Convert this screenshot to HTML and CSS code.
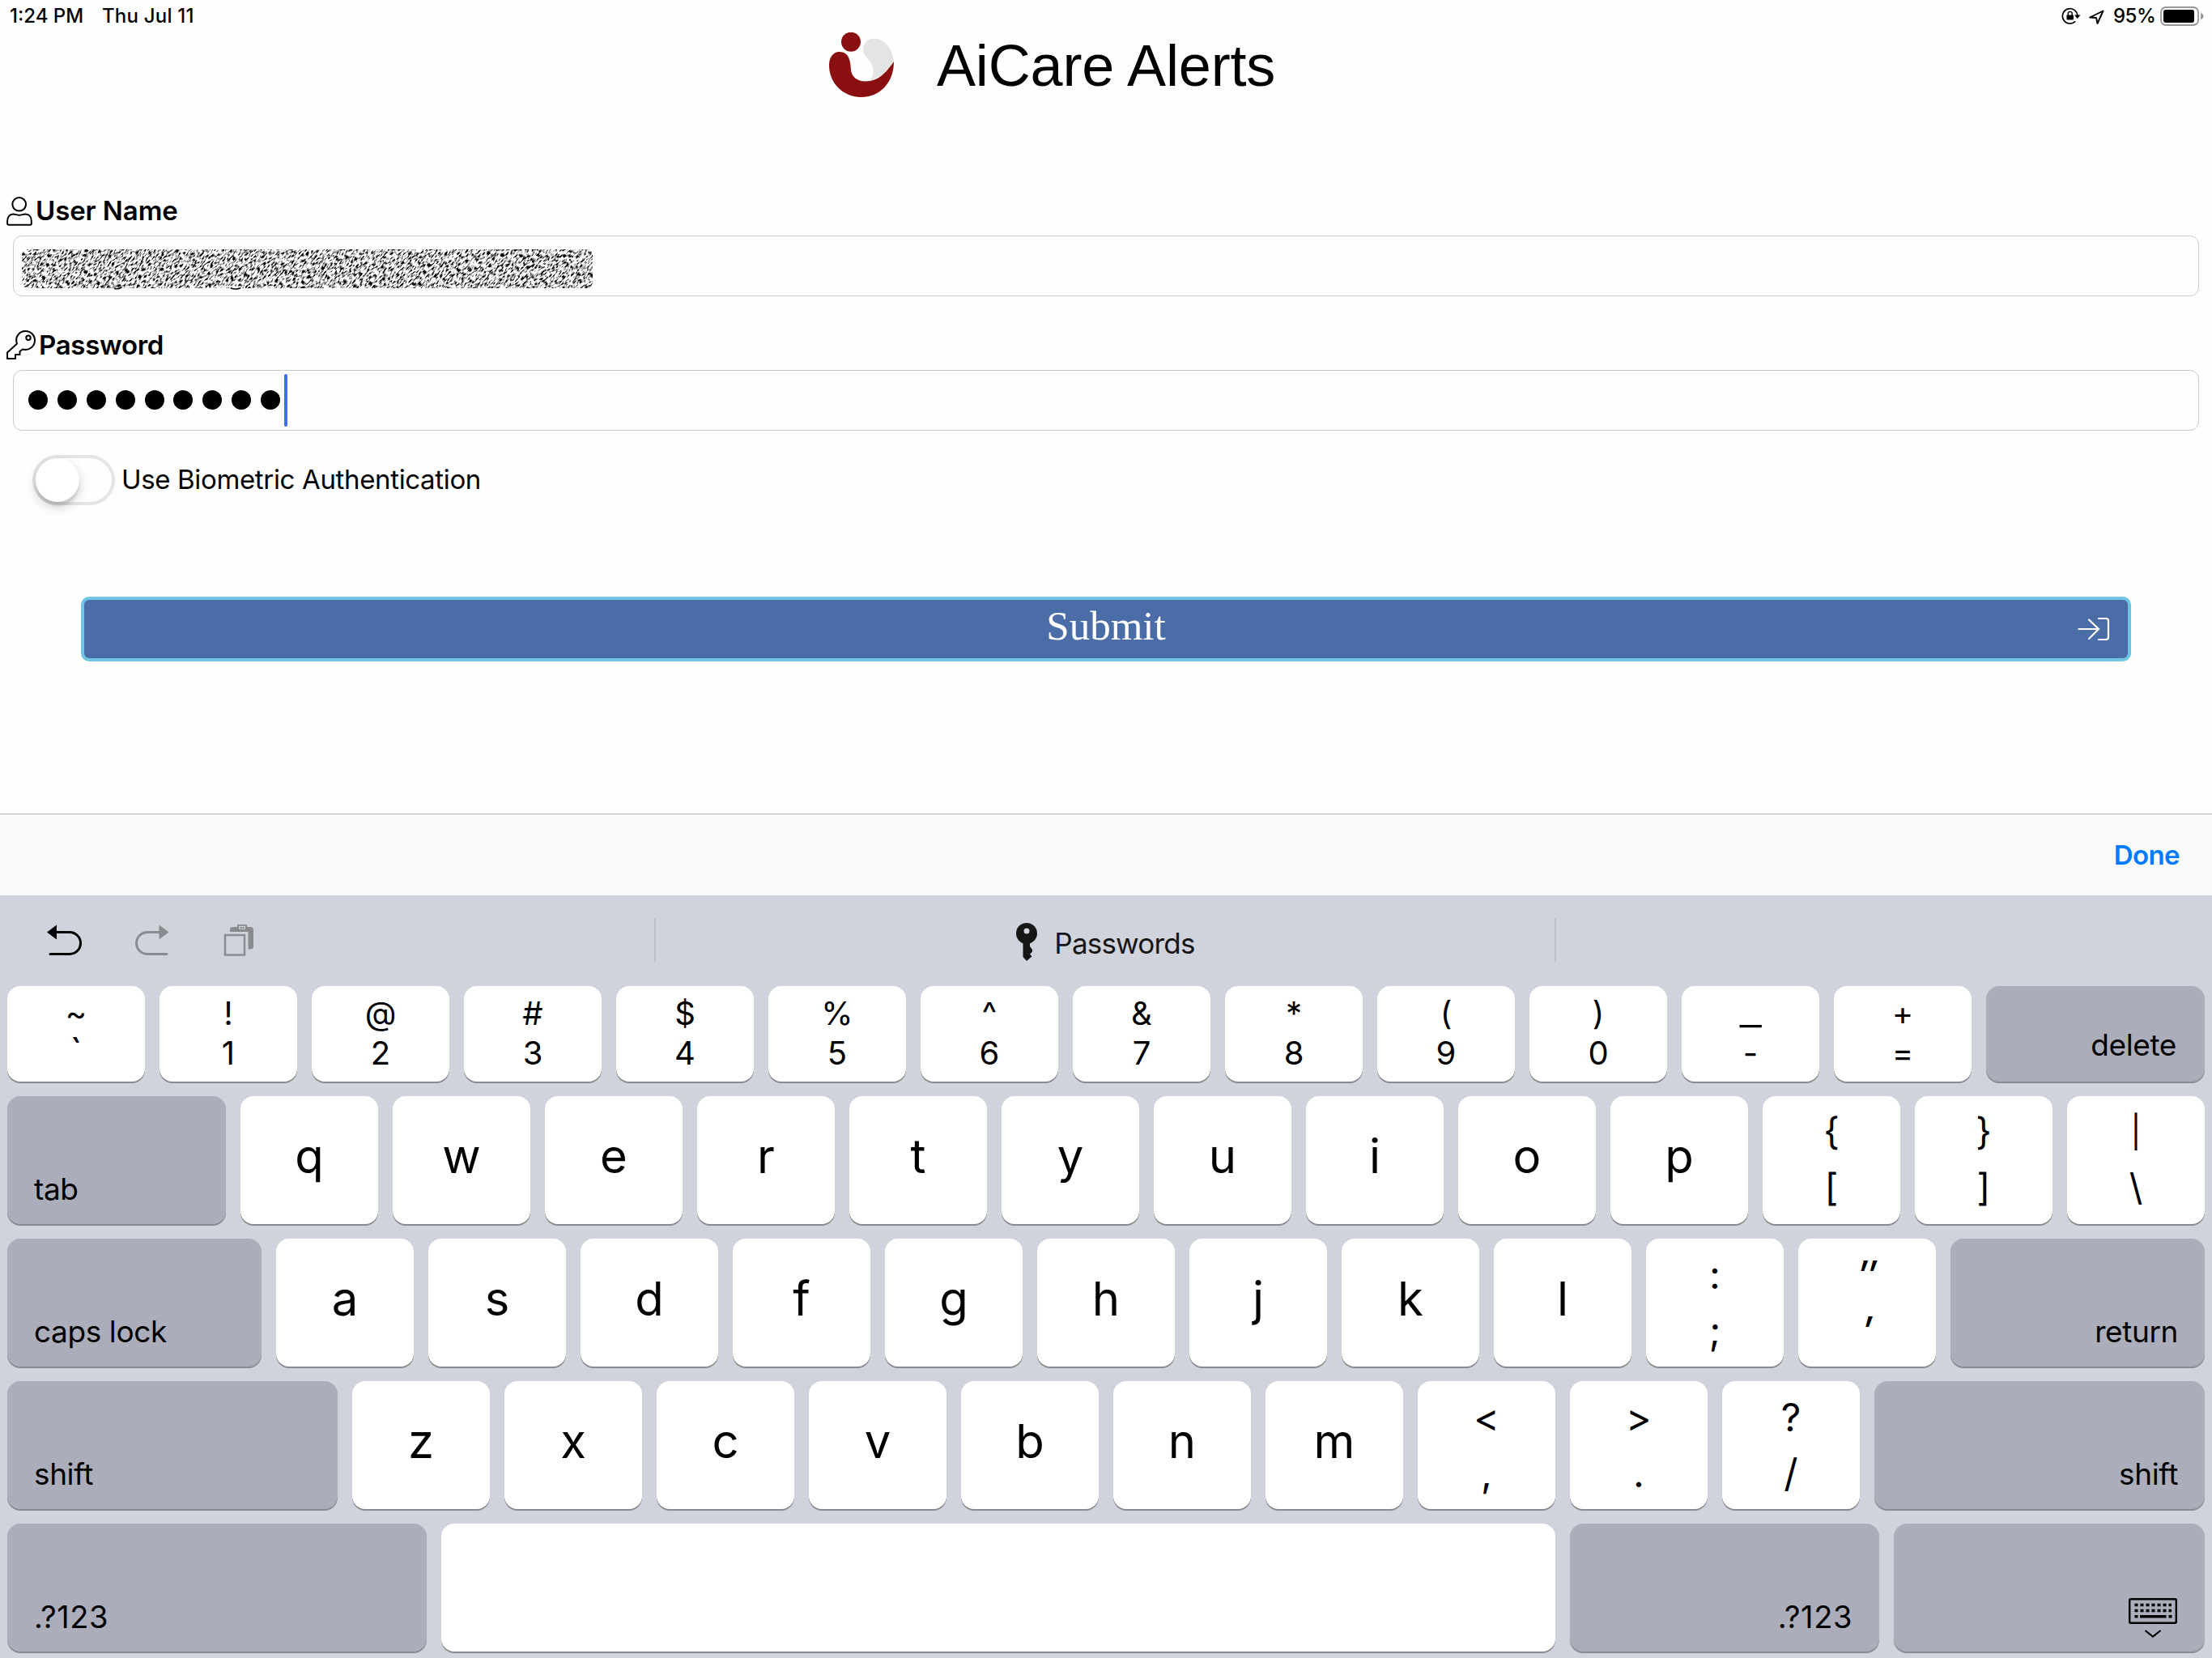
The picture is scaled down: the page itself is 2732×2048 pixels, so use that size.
FILE: index.html
```html
<!DOCTYPE html>
<html lang="en">
<head>
  <meta charset="UTF-8" />
  <title>AiCare Alerts</title>
  <meta name="viewport" content="width=device-width, initial-scale=1.0" />
  <link rel="stylesheet" href="styles.css">
</head>
<body>
  <div class="status-bar">
    <span class="time">1:24 PM</span>
    <span class="date">Thu Jul 11</span>
    <div class="status-right">
      <svg class="lock-icon" width="24" height="22" viewBox="0 0 24 22">
        <path d="M17.200 17.300A9.200 9.200 0 1 1 19.800 10" fill="none" stroke="#000" stroke-width="1.700"/>
        <path d="M16 9.500h7.500l-3.800 4.500z"/>
        <rect x="6.500" y="9.500" width="8.500" height="6" rx="0.800"/>
        <path d="M8.300 10V7.800a2.450 2.450 0 0 1 4.900 0V10" fill="none" stroke="#000" stroke-width="1.400"/>
      </svg>
      <svg class="nav-icon" width="19" height="19" viewBox="0 0 19 19">
        <path d="M1.200 9.500 17.500 1.500 10.500 17 9 10z" fill="none" stroke="#000" stroke-width="1.900" stroke-linejoin="round"/>
      </svg>
      <span class="percent">95%</span>
      <svg class="battery" width="54" height="24" viewBox="0 0 54 24">
        <rect x="1" y="1" width="46" height="22" rx="6" fill="none" stroke="#98989a" stroke-width="1.800"/>
        <rect x="4" y="4" width="38" height="16" rx="3"/>
        <path d="M50 8q3.500 1 3.500 4T50 16z" fill="#98989a"/>
      </svg>
    </div>
  </div>

  <header class="header">
    <svg class="logo" width="80" height="80" viewBox="0 0 80 80">
      <path d="M56 7.500C47 7.500 42 14 42 21.500 42 31 54 35 54.500 46 54.500 52 53 56 50 59 62 57 72 48 80 35.500 78 20 68 7.500 56 7.500z" fill="#e4e4e4"/>
      <path d="M12.600 24C5 24 0 31 0 40.500 0 63 18 80 39.600 80 62 80 80 63 80 36 71 49 61 60.500 45 60.500 35 60.500 27.500 55 27 46 26.500 36 25 24 12.600 24z" fill="#8a0f10"/>
      <circle cx="27" cy="11.700" r="12" fill="#8a0f10"/>
    </svg>
    <h1>AiCare Alerts</h1>
  </header>

  <form class="login-form">
    <div class="label user-label">
      <svg width="32" height="36" viewBox="0 0 32 36" fill="none" stroke="#000" stroke-width="2">
        <circle cx="15.700" cy="9.300" r="8.300"/>
        <path d="M3 34.800H29.500Q30.800 34.800 30.800 33V30C30.800 25 28 21.500 23.500 21.500 20 21.500 19 22.700 15.700 22.700 12.500 22.700 11.500 21.500 8.200 21.500 4 21.500 1.100 25 1.100 30V33Q1.100 34.800 3 34.800z"/>
      </svg>
      <span>User Name</span>
    </div>
    <div class="field">
      <svg class="scribble" width="706" height="52" viewBox="0 0 706 52">
        <defs>
          <filter id="grain" x="0" y="0" width="100%" height="100%">
            <feTurbulence type="fractalNoise" baseFrequency="0.2 0.62" numOctaves="2" seed="4"/>
            <feColorMatrix type="matrix" values="0 0 0 0 0  0 0 0 0 0  0 0 0 0 0  5 0 0 0 -2.300"/>
          </filter>
          <clipPath id="strip"><rect width="705" height="48" rx="8"/></clipPath>
        </defs>
        <g clip-path="url(#strip)">
          <g transform="rotate(-48)">
            <rect x="-60" y="-20" width="600" height="620" filter="url(#grain)"/>
          </g>
        </g>
        <path d="M114 48q4 2 9-1M258 48q6 2 12 0" fill="none" stroke="#000" stroke-width="1.500"/>
      </svg>
    </div>

    <div class="label password-label">
      <svg width="36" height="36" viewBox="0 0 36 36" fill="none" stroke="#000" stroke-width="2" stroke-linejoin="round">
        <path d="M13 16.500C10 8 16 1 23.500 1 30.500 1 35 6.500 35 12.500 35 20 28 25.500 20 23.500L16.500 26V30H11V35H1V27.500z"/>
        <circle cx="27" cy="9.300" r="2.700"/>
      </svg>
      <span>Password</span>
    </div>
    <div class="field password-field">
      <i></i><i></i><i></i><i></i><i></i><i></i><i></i><i></i><i></i>
      <span class="caret"></span>
    </div>

    <div class="biometric">
      <div class="toggle"><div class="knob"></div></div>
      <span>Use Biometric Authentication</span>
    </div>

    <button type="button" class="submit">
      Submit
      <svg class="submit-icon" width="40" height="30" viewBox="0 0 40 30" fill="none" stroke="#fff" stroke-width="2.200" stroke-linecap="round">
        <path d="M1.500 15H26M14 3.500 26 15 14 27"/>
        <path d="M26 2H35Q38 2 38 5V25Q38 28 35 28H26"/>
      </svg>
    </button>
  </form>

  <div class="done-bar">Done</div>

  <div class="keyboard">
    <div class="toolbar">
      <div class="tools">
        <svg width="44" height="40" viewBox="0 0 44 40">
          <path d="M12 10.500H28A13.500 13.500 0 0 1 28 37.500H4" fill="none" stroke="#000" stroke-width="3" stroke-linecap="round"/>
          <path d="M0 10.500 12 1.500V19.500z"/>
        </svg>
        <svg width="44" height="40" viewBox="0 0 44 40">
          <path d="M32 10.500H16A13.500 13.500 0 0 0 16 37.500H40" fill="none" stroke="#8a8b8f" stroke-width="3" stroke-linecap="round"/>
          <path d="M42.500 10.500 30.500 1.500V19.500z" fill="#8a8b8f"/>
        </svg>
        <svg class="paste" width="38" height="40" viewBox="0 0 38 40">
          <rect x="2" y="14" width="24" height="24.500" fill="none" stroke="#8a8b8f" stroke-width="2.400"/>
          <path d="M8 10V8Q8 4 12 4H17V1H29V4H33Q37 4 37 8V28Q37 31.500 33 31.500H30.500V10z" fill="#8a8b8f"/>
          <path d="M19 4.800h8" stroke="#d0d3db" stroke-width="4"/>
          <path d="M20 5h6" stroke="#8a8b8f" stroke-width="1.600"/>
        </svg>
      </div>
      <div class="suggestion">
        <svg width="28" height="48" viewBox="0 0 28 48">
          <path d="M14 0C6.500 0 1 5.500 1 13 1 18.500 4.500 23.500 9.500 25.200V42L14 47 20.500 41.500 18 38.500 21 35.500V33L18 29V25.200C23.500 23.500 27 18.500 27 13 27 5.500 21.500 0 14 0z" fill="#161616"/>
          <circle cx="14" cy="10" r="3.500" fill="#d0d3db"/>
        </svg>
        <span>Passwords</span>
      </div>
      <div class="tools-end"></div>
    </div>

    <div class="row numbers">
      <div class="key two"><span>~</span><span class="tick">`</span></div>
      <div class="key two"><span>!</span><span>1</span></div>
      <div class="key two"><span>@</span><span>2</span></div>
      <div class="key two"><span>#</span><span>3</span></div>
      <div class="key two"><span>$</span><span>4</span></div>
      <div class="key two"><span>%</span><span>5</span></div>
      <div class="key two"><span>^</span><span>6</span></div>
      <div class="key two"><span>&amp;</span><span>7</span></div>
      <div class="key two"><span>*</span><span>8</span></div>
      <div class="key two"><span>(</span><span>9</span></div>
      <div class="key two"><span>)</span><span>0</span></div>
      <div class="key two"><span class="underscore">_</span><span>-</span></div>
      <div class="key two"><span>+</span><span>=</span></div>
      <div class="key dark right">delete</div>
    </div>

    <div class="row">
      <div class="key dark tab">tab</div>
      <div class="key">q</div>
      <div class="key">w</div>
      <div class="key">e</div>
      <div class="key">r</div>
      <div class="key">t</div>
      <div class="key">y</div>
      <div class="key">u</div>
      <div class="key">i</div>
      <div class="key">o</div>
      <div class="key">p</div>
      <div class="key two"><span>{</span><span>[</span></div>
      <div class="key two"><span>}</span><span>]</span></div>
      <div class="key two"><span class="pipe">|</span><span>\</span></div>
    </div>

    <div class="row">
      <div class="key dark">caps lock</div>
      <div class="key">a</div>
      <div class="key">s</div>
      <div class="key">d</div>
      <div class="key">f</div>
      <div class="key">g</div>
      <div class="key">h</div>
      <div class="key">j</div>
      <div class="key">k</div>
      <div class="key">l</div>
      <div class="key two low"><span>:</span><span>;</span></div>
      <div class="key two low slant"><span>″</span><span>′</span></div>
      <div class="key dark right">return</div>
    </div>

    <div class="row">
      <div class="key dark">shift</div>
      <div class="key">z</div>
      <div class="key">x</div>
      <div class="key">c</div>
      <div class="key">v</div>
      <div class="key">b</div>
      <div class="key">n</div>
      <div class="key">m</div>
      <div class="key two low"><span>&lt;</span><span>,</span></div>
      <div class="key two low"><span>&gt;</span><span>.</span></div>
      <div class="key two low"><span>?</span><span>/</span></div>
      <div class="key dark right">shift</div>
    </div>

    <div class="row bottom">
      <div class="key dark">.?123</div>
      <div class="key space"></div>
      <div class="key dark right symbols">.?123</div>
      <div class="key dark right hide">
        <svg width="60" height="52" viewBox="0 0 60 52" fill="none" stroke="#000">
          <rect x="1.200" y="1.200" width="57.600" height="29.600" rx="1.500" stroke-width="2.400"/>
          <path d="M7.500 8.500H53M7.500 15.500H53" stroke-width="3.600" stroke-dasharray="4 3"/>
          <path d="M7.500 22.800h4M14 22.800H46.500M49.500 22.800h4" stroke-width="3.600"/>
          <path d="M20.500 40 30 47.500 39.500 40" stroke-width="2.200"/>
        </svg>
      </div>
    </div>
  </div>
</body>
</html>
```
FILE: styles.css
```css
* {
  margin: 0;
  padding: 0;
  box-sizing: border-box;
}

body {
  width: 2732px;
  height: 2048px;
  overflow: hidden;
  display: flex;
  flex-direction: column;
  background: #fefefe;
  color: #000;
  font-family: Inter, Roboto, sans-serif;
}

svg {
  display: block;
  flex: none;
}

/* status bar */
.status-bar {
  display: flex;
  align-items: center;
  height: 40px;
  padding: 0 10px 0 12px;
  font-size: 24px;
  font-weight: 500;
  line-height: 40px;
  white-space: nowrap;
}

.time {
  width: 114px;
}

.date {
  letter-spacing: 0.2px;
}

.status-right {
  display: flex;
  align-items: center;
  margin-left: auto;
}

.nav-icon {
  margin: 2px 11px 0 10px;
}

.percent {
  width: 58px;
  letter-spacing: -0.5px;
}

/* title */
.header {
  display: flex;
  align-items: center;
  height: 80px;
  padding-left: 1024px;
  gap: 53px;
}

.header h1 {
  padding-top: 2px;
  font-family: "Liberation Sans", Arial, sans-serif;
  font-size: 72px;
  font-weight: 400;
  line-height: 82px;
  letter-spacing: -0.15px;
}

/* form */
.login-form {
  height: 885px;
  padding: 121px 16px 0;
}

.label {
  display: flex;
  align-items: center;
  height: 40px;
  margin-left: -8px;
  gap: 4px;
  font-size: 33px;
  font-weight: 600;
  line-height: 40px;
  letter-spacing: -0.1px;
}

.user-label span {
  margin-top: -2px;
}

.password-label {
  margin-top: 40px;
  letter-spacing: -0.3px;
}

.field {
  display: flex;
  align-items: center;
  height: 75px;
  margin-top: 10px;
  border: 1.5px solid #cbcbcd;
  border-radius: 11px;
}

.password-field {
  margin-top: 11px;
  padding: 0 0 1px 18px;
  gap: 11.9px;
}

.password-field i {
  width: 24px;
  height: 24px;
  border-radius: 50%;
  background: #000;
}

.caret {
  width: 4px;
  height: 65px;
  margin-left: -7px;
  border-radius: 2px;
  background: #416ef0;
}

.scribble {
  margin: 11px 0 0 10px;
}

.biometric {
  display: flex;
  align-items: center;
  gap: 8px;
  margin: 30px 0 0 24px;
  font-size: 33px;
  line-height: 62px;
  letter-spacing: -0.35px;
}

.biometric span {
  margin-top: -2px;
}

.toggle {
  width: 102px;
  height: 62px;
  border: 4px solid #e5e5e6;
  border-radius: 31px;
}

.knob {
  width: 54px;
  height: 54px;
  border-radius: 50%;
  background: #fff;
  box-shadow: 0 6px 14px rgba(0, 0, 0, 0.2), 0 5px 2px rgba(0, 0, 0, 0.08);
}

.submit {
  position: relative;
  display: block;
  width: 2532px;
  height: 80px;
  margin: 113px 0 0 84px;
  padding-bottom: 8px;
  border: 4px solid #6ec6e4;
  border-radius: 10px;
  background: #4a6da7;
  color: #fff;
  font-family: "Liberation Serif", Georgia, serif;
  font-size: 51px;
}

.submit-icon {
  position: absolute;
  top: 21px;
  right: 22px;
}

.done-bar {
  height: 101px;
  padding-right: 40px;
  border-top: 1px solid #afafb1;
  background: #f9f9f9;
  color: #007aff;
  font-size: 33px;
  font-weight: 600;
  line-height: 100px;
  letter-spacing: -0.6px;
  text-align: right;
}

/* keyboard */
.keyboard {
  display: flex;
  flex-direction: column;
  gap: 18px;
  height: 942px;
  padding: 0 9px 8px;
  background: #d0d3db;
}

.toolbar {
  display: flex;
  align-items: center;
  height: 94px;
  padding-top: 16px;
}

.tools {
  display: flex;
  width: 799px;
  padding-left: 49px;
  gap: 64px;
}

.paste {
  margin-left: 2px;
}

.tools-end {
  flex: 1;
}

.suggestion {
  display: flex;
  align-items: center;
  justify-content: center;
  width: 1114px;
  height: 54px;
  gap: 20px;
  border-left: 2px solid #bbbec4;
  border-right: 2px solid #bbbec4;
  color: #161616;
  font-size: 35px;
  letter-spacing: -0.8px;
}

.suggestion svg {
  margin-top: 6px;
}

.suggestion span {
  margin-top: 7px;
}

.row {
  display: flex;
  gap: 18px;
  height: 158px;
}

.key {
  display: flex;
  align-items: center;
  justify-content: center;
  width: 170px;
  padding-bottom: 11px;
  border-radius: 16px;
  background: #fff;
  box-shadow: 0 2px 0 #88898d;
  font-size: 58px;
}

.two {
  flex-direction: column;
  padding-bottom: 3px;
  font-size: 46px;
}

.two span {
  line-height: 69px;
}

.low {
  padding-bottom: 0;
  font-size: 48px;
}

.slant {
  font-style: italic;
  font-weight: 500;
}

.pipe {
  font-size: 39px;
}

.numbers {
  height: 118px;
}

.numbers .two {
  padding-bottom: 2px;
  font-size: 40px;
}

.numbers .two span {
  line-height: 49px;
}

.numbers .underscore {
  transform: scaleX(1.5);
}

.numbers .tick {
  font-size: 48px;
}

.dark {
  flex: 1;
  align-items: flex-end;
  justify-content: flex-start;
  padding: 0 33px 20px;
  background: #abaeba;
  font-size: 37px;
  line-height: 46px;
  letter-spacing: -0.4px;
}

.numbers .dark {
  padding: 0 35px 22px;
}

.right {
  justify-content: flex-end;
}

.bottom .dark {
  flex: none;
  width: 518px;
  font-size: 38px;
  letter-spacing: 0.6px;
}

.bottom .space {
  flex: 1;
}

.bottom .symbols {
  width: 382px;
}

.bottom .hide {
  width: 384px;
  padding: 0 34px 14px;
}
```
